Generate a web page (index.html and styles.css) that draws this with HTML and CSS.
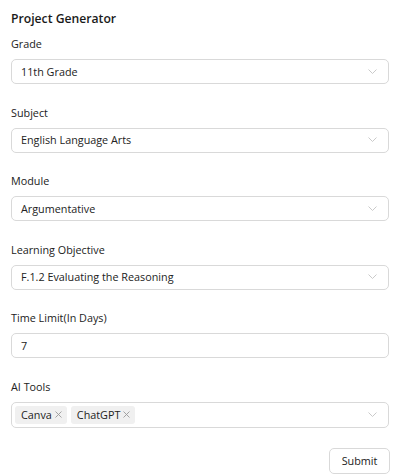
FILE: index.html
```html
<!DOCTYPE html>
<html>
<head>
<meta charset="utf-8">
<link rel="stylesheet" href="styles.css">
</head>
<body>
<div class="page">
  <h1 class="title">Project Generator</h1>
  <div class="field">
    <div class="label">Grade</div>
    <div class="select"><span class="value">11th Grade</span><svg class="chev" viewBox="0 0 9 5" width="9" height="5"><path d="M0.5 0.5 L4.5 4.5 L8.5 0.5" fill="none" stroke="#c4c4c4" stroke-width="0.9"/></svg></div>
  </div>
  <div class="field">
    <div class="label">Subject</div>
    <div class="select"><span class="value">English Language Arts</span><svg class="chev" viewBox="0 0 9 5" width="9" height="5"><path d="M0.5 0.5 L4.5 4.5 L8.5 0.5" fill="none" stroke="#c4c4c4" stroke-width="0.9"/></svg></div>
  </div>
  <div class="field">
    <div class="label">Module</div>
    <div class="select"><span class="value">Argumentative</span><svg class="chev" viewBox="0 0 9 5" width="9" height="5"><path d="M0.5 0.5 L4.5 4.5 L8.5 0.5" fill="none" stroke="#c4c4c4" stroke-width="0.9"/></svg></div>
  </div>
  <div class="field">
    <div class="label">Learning Objective</div>
    <div class="select"><span class="value">F.1.2 Evaluating the Reasoning</span><svg class="chev" viewBox="0 0 9 5" width="9" height="5"><path d="M0.5 0.5 L4.5 4.5 L8.5 0.5" fill="none" stroke="#c4c4c4" stroke-width="0.9"/></svg></div>
  </div>
  <div class="field">
    <div class="label">Time Limit(In Days)</div>
    <div class="select input"><span class="value">7</span></div>
  </div>
  <div class="field">
    <div class="label">AI Tools</div>
    <div class="select multi">
      <div class="tags">
        <span class="tag">Canva<svg class="x" viewBox="0 0 7 7" width="7" height="7"><path d="M0.5 0.5 L6.5 6.5 M6.5 0.5 L0.5 6.5" stroke="#9a9a9a" stroke-width="0.9"/></svg></span>
        <span class="tag">ChatGPT<svg class="x" viewBox="0 0 7 7" width="7" height="7"><path d="M0.5 0.5 L6.5 6.5 M6.5 0.5 L0.5 6.5" stroke="#9a9a9a" stroke-width="0.9"/></svg></span>
      </div>
      <svg class="chev" viewBox="0 0 9 5" width="9" height="5"><path d="M0.5 0.5 L4.5 4.5 L8.5 0.5" fill="none" stroke="#c4c4c4" stroke-width="0.9"/></svg>
    </div>
  </div>
  <div class="actions">
    <button class="btn">Submit</button>
  </div>
</div>
</body>
</html>
```
FILE: styles.css
```css
html, body {
  margin: 0;
  padding: 0;
  background: #fff;
}
body {
  font-family: "Open Sans", "Noto Sans", sans-serif;
  color: #1f1f1f;
}
.page {
  width: 378px;
  padding: 9px 13px 0 11px;
}
.title {
  margin: 0 0 7px 0;
  font-size: 12.2px;
  line-height: 20px;
  font-weight: 600;
  color: #1a1a1a;
}
.field {
  margin-bottom: 20.6px;
}
.label {
  font-size: 10.8px;
  line-height: 16px;
  margin-bottom: 7px;
  color: #222;
}
.select {
  height: 25px;
  box-sizing: border-box;
  border: 1px solid #d9d9d9;
  border-radius: 5px;
  display: flex;
  align-items: center;
  justify-content: space-between;
  padding: 0 11px 1px 9px;
  font-size: 10.8px;
  color: #222;
}
.chev {
  display: block;
}
.multi {
  height: 26px;
  padding-left: 3px;
  padding-bottom: 0;
}
.tags {
  display: flex;
  gap: 4px;
}
.tag {
  display: flex;
  align-items: center;
  gap: 3px;
  background: #f0f0f0;
  border-radius: 3px;
  height: 18px;
  padding: 0 5px 0 6px;
  font-size: 10.8px;
  color: #222;
}
.x {
  display: block;
}
.actions {
  display: flex;
  justify-content: flex-end;
  margin-top: -0.6px;
}
.btn {
  font-family: inherit;
  font-size: 10.8px;
  color: #222;
  background: #fff;
  border: 1px solid #d9d9d9;
  border-radius: 5px;
  height: 26px;
  width: 61px;
  padding: 0;
  margin-right: -1px;
}
```
